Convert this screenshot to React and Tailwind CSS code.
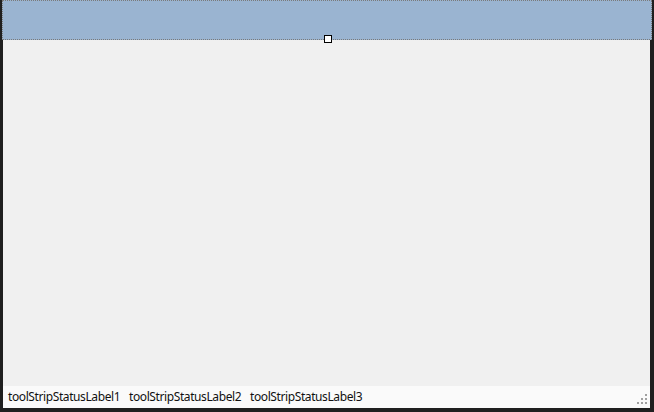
export default function App() {
  const labels = ['toolStripStatusLabel1', 'toolStripStatusLabel2', 'toolStripStatusLabel3']

  return (
    <div className="relative flex h-[412px] w-[654px] flex-col bg-[#1f1f1f] pb-[4px] pl-[3px] pr-[4px]">
      {/* designer-selected top panel */}
      <div className="-ml-[1px] -mr-[2px] h-[40px] shrink-0 border border-dotted border-[#7a7a7a] bg-[#9ab4d1]" />

      {/* form body */}
      <div className="flex-1 bg-[#f0f0f0]" />

      {/* status strip */}
      <div className="relative flex h-[22px] shrink-0 items-center bg-[#fafafa] pl-[5px] font-['Noto_Sans','Noto_Sans_CJK_KR',sans-serif] text-[12px] tracking-[-0.4px] text-[#111]">
        {labels.map((label) => (
          <span key={label} className="w-[121px] whitespace-nowrap">
            {label}
          </span>
        ))}
        <svg className="absolute bottom-[2px] right-[1px]" width="12" height="12" viewBox="0 0 12 12">
          <rect x="8" y="0" width="2" height="2" fill="#a0a0a0" />
          <rect x="4" y="4" width="2" height="2" fill="#a0a0a0" />
          <rect x="8" y="4" width="2" height="2" fill="#a0a0a0" />
          <rect x="0" y="8" width="2" height="2" fill="#a0a0a0" />
          <rect x="4" y="8" width="2" height="2" fill="#a0a0a0" />
          <rect x="8" y="8" width="2" height="2" fill="#a0a0a0" />
        </svg>
      </div>

      {/* resize handle of selected panel */}
      <div className="absolute left-[324px] top-[35px] h-[8px] w-[8px] border border-black bg-white" />
    </div>
  )
}
